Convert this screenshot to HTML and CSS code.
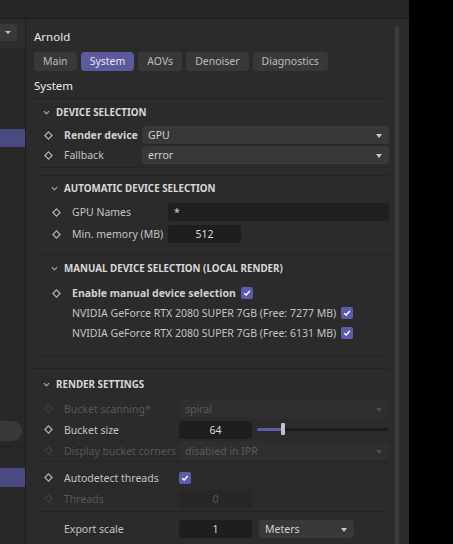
FILE: index.html
```html
<!DOCTYPE html>
<html lang="en">
<head>
  <meta charset="UTF-8">
  <meta name="viewport" content="width=device-width, initial-scale=1.0">
  <title>Arnold Render Settings</title>
  <link rel="stylesheet" href="styles.css">
</head>
<body>
  <div class="window">
    <div class="topbar"></div>
    <div class="panes">

      <!-- Left pane (mostly cut off) -->
      <div class="sidebar">
        <div class="side-head">
          <div class="side-drop"></div>
        </div>
        <div class="side-sel first"></div>
        <div class="side-field"></div>
        <div class="side-line"></div>
        <div class="side-sel second"></div>
      </div>

      <!-- Render settings -->
      <div class="main">
        <div class="content">
          <div class="title">Arnold</div>
          <div class="tabs">
            <div class="tab">Main</div>
            <div class="tab active">System</div>
            <div class="tab">AOVs</div>
            <div class="tab">Denoiser</div>
            <div class="tab">Diagnostics</div>
          </div>
          <div class="heading">System</div>

          <!-- Device selection -->
          <div class="group device">
            <div class="group-head">
              <svg class="chev" viewBox="0 0 8 5"><path d="M1 1 L4 4 L7 1"/></svg>
              <span>Device Selection</span>
            </div>
            <div class="group-body">
              <div class="block">
                <div class="row">
                  <svg class="key" viewBox="0 0 10 10"><path d="M5 1 L9 5 L5 9 L1 5 Z"/></svg>
                  <span class="label bold">Render device</span>
                  <div class="drop">GPU</div>
                </div>
                <div class="row">
                  <svg class="key" viewBox="0 0 10 10"><path d="M5 1 L9 5 L5 9 L1 5 Z"/></svg>
                  <span class="label">Fallback</span>
                  <div class="drop">error</div>
                </div>
              </div>

              <div class="sub auto">
                <div class="group-head">
                  <svg class="chev" viewBox="0 0 8 5"><path d="M1 1 L4 4 L7 1"/></svg>
                  <span>Automatic Device Selection</span>
                </div>
                <div class="row tall">
                  <svg class="key" viewBox="0 0 10 10"><path d="M5 1 L9 5 L5 9 L1 5 Z"/></svg>
                  <span class="label">GPU Names</span>
                  <div class="field">*</div>
                </div>
                <div class="row tall">
                  <svg class="key" viewBox="0 0 10 10"><path d="M5 1 L9 5 L5 9 L1 5 Z"/></svg>
                  <span class="label">Min. memory (MB)</span>
                  <div class="num">512</div>
                </div>
              </div>

              <div class="sub manual">
                <div class="group-head">
                  <svg class="chev" viewBox="0 0 8 5"><path d="M1 1 L4 4 L7 1"/></svg>
                  <span>Manual Device Selection (Local Render)</span>
                </div>
                <div class="rows">
                  <div class="row">
                    <svg class="key" viewBox="0 0 10 10"><path d="M5 1 L9 5 L5 9 L1 5 Z"/></svg>
                    <span class="label bold">Enable manual device selection</span>
                    <span class="check"><svg viewBox="0 0 12 12"><path d="M3.2 6.2 L5.2 8 L8.8 4"/></svg></span>
                  </div>
                  <div class="row">
                    <span class="key-space"></span>
                    <span class="label">NVIDIA GeForce RTX 2080 SUPER 7GB (Free: 7277 MB)</span>
                    <span class="check"><svg viewBox="0 0 12 12"><path d="M3.2 6.2 L5.2 8 L8.8 4"/></svg></span>
                  </div>
                  <div class="row">
                    <span class="key-space"></span>
                    <span class="label">NVIDIA GeForce RTX 2080 SUPER 7GB (Free: 6131 MB)</span>
                    <span class="check"><svg viewBox="0 0 12 12"><path d="M3.2 6.2 L5.2 8 L8.8 4"/></svg></span>
                  </div>
                </div>
              </div>
            </div>
          </div>

          <!-- Render settings -->
          <div class="group render">
            <div class="group-head">
              <svg class="chev" viewBox="0 0 8 5"><path d="M1 1 L4 4 L7 1"/></svg>
              <span>Render Settings</span>
            </div>
            <div class="group-body">
              <div class="block first">
                <div class="row wide disabled">
                  <svg class="key" viewBox="0 0 10 10"><path d="M5 1 L9 5 L5 9 L1 5 Z"/></svg>
                  <span class="label">Bucket scanning*</span>
                  <div class="drop">spiral</div>
                </div>
                <div class="row wide">
                  <svg class="key" viewBox="0 0 10 10"><path d="M5 1 L9 5 L5 9 L1 5 Z"/></svg>
                  <span class="label">Bucket size</span>
                  <div class="num">64</div>
                  <div class="slider">
                    <div class="slider-fill" style="width: 20%"></div>
                    <div class="slider-handle" style="left: 20%"></div>
                  </div>
                </div>
                <div class="row wide disabled">
                  <svg class="key" viewBox="0 0 10 10"><path d="M5 1 L9 5 L5 9 L1 5 Z"/></svg>
                  <span class="label">Display bucket corners</span>
                  <div class="drop">disabled in IPR</div>
                </div>
              </div>
              <div class="block second">
                <div class="row wide">
                  <svg class="key" viewBox="0 0 10 10"><path d="M5 1 L9 5 L5 9 L1 5 Z"/></svg>
                  <span class="label">Autodetect threads</span>
                  <span class="check"><svg viewBox="0 0 12 12"><path d="M3.2 6.2 L5.2 8 L8.8 4"/></svg></span>
                </div>
                <div class="row wide disabled">
                  <svg class="key" viewBox="0 0 10 10"><path d="M5 1 L9 5 L5 9 L1 5 Z"/></svg>
                  <span class="label">Threads</span>
                  <div class="num">0</div>
                </div>
              </div>
              <div class="block third">
                <div class="row wide">
                  <span class="key-space"></span>
                  <span class="label">Export scale</span>
                  <div class="num">1</div>
                  <div class="drop units">Meters</div>
                </div>
              </div>
            </div>
          </div>
        </div>
        <div class="scrollbar"></div>
      </div>
    </div>
  </div>
</body>
</html>
```

FILE: styles.css
```css
/* General */
body {
  margin: 0;
  background: #000;
  font-family: 'Noto Sans', 'Open Sans', sans-serif;
  font-size: 10.5px;
  color: #c4c4c4;
}

.window {
  width: 409px;
  height: 544px;
  background: #2b2b2b;
  display: flex;
  flex-direction: column;
  overflow: hidden;
}

.topbar {
  height: 18px;
  flex: none;
  background: #262626;
  border-bottom: 1px solid #1d1d1d;
}

.panes {
  flex: 1;
  display: flex;
  min-height: 0;
}

/* Left pane */
.sidebar {
  width: 25px;
  flex: none;
  background: #282828;
  border-right: 1px solid #1f1f1f;
}

.side-head {
  height: 29px;
  padding-top: 5px;
  box-sizing: border-box;
  background: #2d2d2d;
}

.side-drop {
  width: 17px;
  height: 17px;
  background: #393939;
  border-radius: 0 4px 4px 0;
  position: relative;
}

.side-drop::after {
  content: '';
  position: absolute;
  left: 5px;
  top: 7px;
  border-left: 3px solid transparent;
  border-right: 3px solid transparent;
  border-top: 3px solid #c4c4c4;
}

.side-sel {
  height: 18px;
  background: #4a4a80;
}

.side-sel.first {
  margin-top: 81px;
}

.side-field {
  margin-top: 274px;
  width: 22px;
  height: 20px;
  background: #393939;
  border-radius: 0 10px 10px 0;
}

.side-line {
  margin-top: 5px;
  height: 1px;
  background: #202020;
}

.side-sel.second {
  margin-top: 21px;
  height: 19px;
}

/* Main pane */
.main {
  flex: 1;
  display: flex;
  min-width: 0;
}

.content {
  flex: 1;
  padding: 0 6px;
  min-width: 0;
}

.scrollbar {
  width: 4px;
  margin: 7px 10px 0 0;
  background: #3b3b3b;
  border-radius: 2px 2px 0 0;
}

.title {
  margin: 9px 0 0 2px;
  line-height: 18px;
  font-size: 11.5px;
  color: #ececec;
}

.tabs {
  display: flex;
  gap: 4px;
  margin: 6px 0 0 2px;
}

.tab {
  height: 19px;
  line-height: 19px;
  padding: 0 9px;
  background: #383838;
  border-radius: 4px;
  color: #bcbcbc;
}

.tab.active {
  background: #5a5a9c;
  color: #e6e6f2;
}

.heading {
  margin: 6px 0 3px 2px;
  line-height: 18px;
  font-size: 11.5px;
  color: #ececec;
}

/* Groups */
.group-head {
  height: 26px;
  display: flex;
  align-items: center;
  padding-left: 11px;
  font-size: 9.8px;
  font-weight: bold;
  text-transform: uppercase;
  color: #d8d8d8;
}

.chev {
  width: 7px;
  height: 5px;
  margin-right: 6px;
  fill: none;
  stroke: #b8b8b8;
  stroke-width: 1.2;
}

.group.device {
  border-top: 1px solid #222;
  border-bottom: 1px solid #222;
  padding-bottom: 11px;
}

.group.render {
  padding-top: 2px;
}

.group-body {
  padding-left: 8px;
}

.block {
  border-bottom: 1px solid #242424;
}

.device .block {
  padding-bottom: 2px;
}

.sub {
  border-top: 1px solid #222;
}

.sub .group-head {
  height: 25px;
}

.sub .row {
  padding-left: 8px;
}

.sub.auto {
  margin-top: 7px;
  padding-bottom: 9px;
}

.sub.manual {
  border-bottom: 1px solid #242424;
  padding-bottom: 13px;
}

.sub.manual .group-head {
  height: 27px;
}

.sub.manual .rows {
  padding-top: 1px;
}

.render .block.first {
  padding-top: 1px;
}

.render .block.second {
  padding: 5px 0 2px;
}

.render .block.third {
  border-bottom: none;
  padding-top: 6px;
}

/* Rows */
.row {
  height: 20px;
  display: flex;
  align-items: center;
}

.row.tall {
  height: 22px;
}

.row.wide {
  height: 21px;
}

.key {
  width: 9px;
  height: 9px;
  flex: none;
  margin: 0 11px 0 4px;
  fill: none;
  stroke: #b4b4b4;
  stroke-width: 1.3;
}

.key-space {
  width: 24px;
  flex: none;
}

.label {
  flex: none;
  width: 78px;
  white-space: nowrap;
}

.sub .label {
  width: 96px;
}

.sub.manual .label {
  width: auto;
}

.render .label {
  width: 115px;
}

.label.bold {
  font-weight: bold;
  color: #cfcfd6;
}

.drop {
  flex: 1;
  height: 18px;
  line-height: 18px;
  padding-left: 6px;
  background: #383838;
  border-radius: 3px;
  color: #d2d2d2;
  position: relative;
}

.drop::after {
  content: '';
  position: absolute;
  right: 7px;
  top: 8px;
  border-left: 3.5px solid transparent;
  border-right: 3.5px solid transparent;
  border-top: 4px solid #c8c8c8;
}

.drop.units {
  flex: none;
  width: 89px;
  margin-left: 7px;
}

.field {
  flex: 1;
  height: 18px;
  line-height: 18px;
  padding-left: 6px;
  background: #1f1f1f;
  border-radius: 3px;
  color: #d2d2d2;
}

.num {
  width: 73px;
  flex: none;
  height: 18px;
  line-height: 18px;
  text-align: center;
  background: #1e1e1e;
  border-radius: 3px;
  color: #dcdcdc;
}

.check {
  width: 12px;
  height: 12px;
  flex: none;
  margin-left: 5px;
  background: #5c5cab;
  border-radius: 2px;
  display: flex;
}

.render .check {
  margin-left: 0;
}

.check svg {
  width: 12px;
  height: 12px;
  fill: none;
  stroke: #fff;
  stroke-width: 1.5;
}

/* Slider */
.slider {
  flex: 1;
  height: 3px;
  margin-left: 5px;
  background: #1c1c1c;
  border-radius: 2px;
  position: relative;
}

.slider-fill {
  height: 100%;
  background: #5c5cab;
  border-radius: 2px 0 0 2px;
}

.slider-handle {
  position: absolute;
  top: -5px;
  width: 4px;
  height: 12px;
  margin-left: -2px;
  background: #c2c2c2;
  border-radius: 1px;
}

/* Disabled */
.row.disabled {
  color: #575757;
}

.row.disabled .key {
  stroke: #3e3e3e;
}

.row.disabled .drop {
  background: #2f2f2f;
  color: #5a5a5a;
}

.row.disabled .drop::after {
  border-top-color: #4e4e4e;
}

.row.disabled .num {
  background: #272727;
  color: #575757;
}
```
